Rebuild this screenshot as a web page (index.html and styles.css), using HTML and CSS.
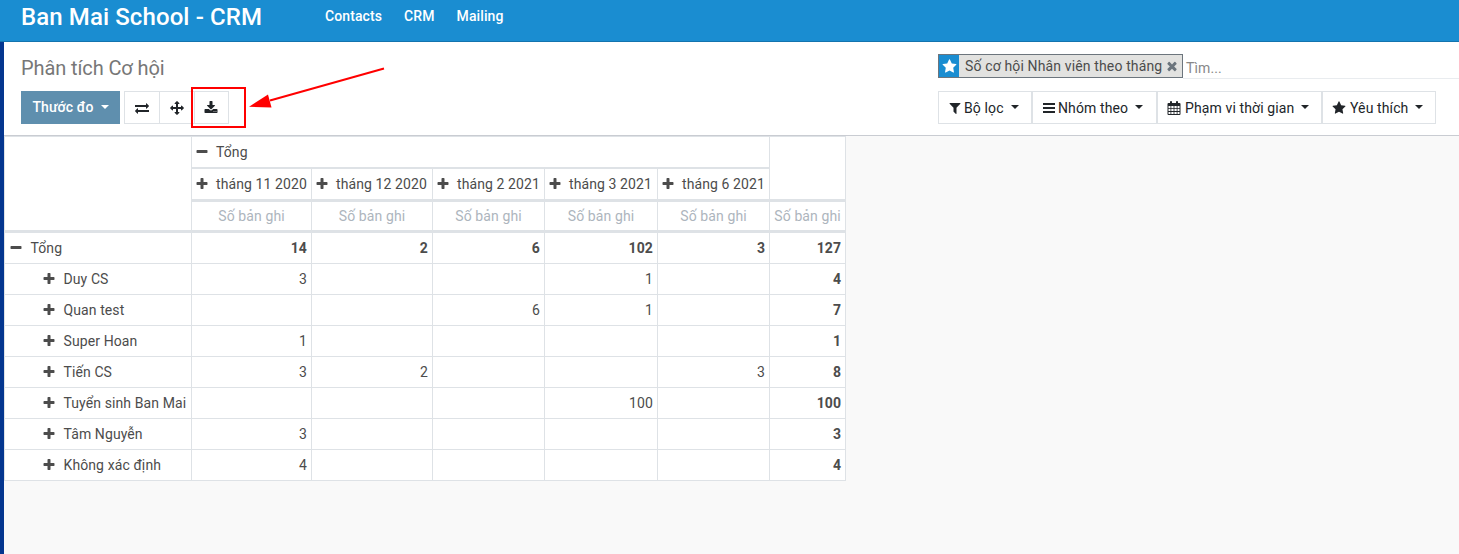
FILE: index.html
```
<!DOCTYPE html>
<html lang="vi">
<head>
<meta charset="utf-8">
<title>Ban Mai School - CRM</title>
<link rel="stylesheet" href="styles.css">
</head>
<body>
<svg class="sprite" width="0" height="0">
  <symbol id="plus" viewBox="0 0 1792 1792"><path d="M1600 736v192q0 40-28 68t-68 28h-416v416q0 40-28 68t-68 28h-192q-40 0-68-28t-28-68v-416h-416q-40 0-68-28t-28-68v-192q0-40 28-68t68-28h416v-416q0-40 28-68t68-28h192q40 0 68 28t28 68v416h416q40 0 68 28t28 68z"/></symbol>
  <symbol id="minus" viewBox="0 0 1792 1792"><path d="M1600 736v192q0 40-28 68t-68 28h-1216q-40 0-68-28t-28-68v-192q0-40 28-68t68-28h1216q40 0 68 28t28 68z"/></symbol>
  <symbol id="star" viewBox="0 0 1792 1792"><path d="M1728 647q0 22-26 48l-363 354 86 500q1 7 1 20 0 21-10.5 35.5t-30.5 14.5q-19 0-40-12l-449-236-449 236q-22 12-40 12-21 0-31.5-14.5t-10.5-35.5q0-6 2-20l86-500-364-354q-25-27-25-48 0-37 56-46l502-73 225-455q19-41 49-41t49 41l225 455 502 73q56 9 56 46z"/></symbol>
  <symbol id="filter" viewBox="0 0 1792 1792"><path d="M1595 295q17 41-14 70l-493 493v742q0 42-39 59-13 5-25 5-27 0-45-19l-256-256q-19-19-19-45v-486l-493-493q-31-29-14-70 17-39 59-39h1280q42 0 59 39z"/></symbol>
  <symbol id="times" viewBox="0 0 1792 1792"><path d="M1490 1322q0 40-28 68l-136 136q-28 28-68 28t-68-28l-294-294-294 294q-28 28-68 28t-68-28l-136-136q-28-28-28-68t28-68l294-294-294-294q-28-28-28-68t28-68l136-136q28-28 68-28t68 28l294 294 294-294q28-28 68-28t68 28l136 136q28 28 28 68t-28 68l-294 294 294 294q28 28 28 68z"/></symbol>
  <symbol id="bars" viewBox="0 0 14 14"><path d="M1 2h12v2H1zM1 6h12v2H1zM1 10h12v2H1z"/></symbol>
  <symbol id="download" viewBox="0 0 1792 1792"><path d="M1344 1344q0-26-19-45t-45-19-45 19-19 45 19 45 45 19 45-19 19-45zm256 0q0-26-19-45t-45-19-45 19-19 45 19 45 45 19 45-19 19-45zm128-224v320q0 40-28 68t-68 28h-1472q-40 0-68-28t-28-68v-320q0-40 28-68t68-28h465l135 136q58 56 136 56t136-56l136-136h464q40 0 68 28t28 68zm-325-569q17 41-14 70l-448 448q-18 19-45 19t-45-19l-448-448q-31-29-14-70 17-39 59-39h256v-448q0-26 19-45t45-19h256q26 0 45 19t19 45v448h256q42 0 59 39z"/></symbol>
  <symbol id="arrows" viewBox="0 0 1792 1792"><path d="M1792 896q0 26-19 45l-256 256q-19 19-45 19t-45-19-19-45v-128h-384v384h128q26 0 45 19t19 45-19 45l-256 256q-19 19-45 19t-45-19l-256-256q-19-19-19-45t19-45 45-19h128v-384h-384v128q0 26-19 45t-45 19-45-19l-256-256q-19-19-19-45t19-45l256-256q19-19 45-19t45 19 19 45v128h384v-384h-128q-26 0-45-19t-19-45 19-45l256-256q19-19 45-19t45 19l256 256q19 19 19 45t-19 45-45 19h-128v384h384v-128q0-26 19-45t45-19 45 19l256 256q19 19 19 45z"/></symbol>
  <symbol id="exchange" viewBox="0 0 1792 1792"><path d="M1792 1184v192q0 13-9.500 22.500t-22.500 9.500h-1376v192q0 13-9.500 22.500t-22.500 9.500q-12 0-24-10l-319-320q-9-9-9-22 0-14 9-23l320-320q9-9 23-9 13 0 22.500 9.500t9.500 22.500v192h1376q13 0 22.500 9.500t9.500 22.500zm0-544q0 14-9 23l-320 320q-9 9-23 9-13 0-22.500-9.500t-9.500-22.500v-192h-1376q-13 0-22.500-9.500t-9.500-22.500v-192q0-13 9.500-22.500t22.500-9.500h1376v-192q0-14 9-23t23-9q12 0 24 10l319 319q9 9 9 23z"/></symbol>
  <symbol id="calendar" viewBox="0 0 14 14"><path fill-rule="evenodd" d="M1.500 2H3V.8Q3 0 4 0t1 .8V2h4V.8Q9 0 10 0t1 .8V2h1.500q1 0 1 1v10q0 1-1 1h-11q-1 0-1-1V3q0-1 1-1zM1.500 5v2h2V5zM4.300 5v2h2.300V5zM7.400 5v2h2.300V5zM10.500 5v2h2V5zM1.500 7.800v2.300h2V7.800zM4.300 7.800v2.300h2.300V7.800zM7.400 7.800v2.300h2.300V7.800zM10.500 7.800v2.300h2V7.800zM1.500 10.900V13h2v-2.100zM4.300 10.900V13h2.300v-2.100zM7.400 10.900V13h2.300v-2.100zM10.500 10.900V13h2v-2.100z"/></symbol>
</svg>

<header class="navbar">
  <div class="brand">Ban Mai School - CRM</div>
  <nav class="menu"><a>Contacts</a><a>CRM</a><a>Mailing</a></nav>
</header>

<div class="app">
  <section class="control-panel">
    <div class="panel-left">
      <h1 class="title">Phân tích Cơ hội</h1>
      <div class="buttons">
        <button class="btn btn-primary">Thước đo<span class="caret"></span></button>
        <div class="icon-group">
          <button class="btn"><svg class="icon"><use href="#exchange"/></svg></button>
          <button class="btn"><svg class="icon"><use href="#arrows"/></svg></button>
          <button class="btn"><svg class="icon"><use href="#download"/></svg></button>
        </div>
      </div>
    </div>
    <div class="panel-right">
      <div class="search">
        <div class="facet">
          <span class="facet-icon"><svg class="icon facet-star"><use href="#star"/></svg></span>
          <span class="facet-text">Số cơ hội Nhân viên theo tháng</span>
          <svg class="icon facet-remove"><use href="#times"/></svg>
        </div>
        <div class="search-input">Tìm...</div>
      </div>
      <div class="filters">
        <button class="btn filter-btn w-filter"><svg class="icon"><use href="#filter"/></svg><span class="label">Bộ lọc</span><span class="caret"></span></button>
        <button class="btn filter-btn w-group"><svg class="icon"><use href="#bars"/></svg><span class="label">Nhóm theo</span><span class="caret"></span></button>
        <button class="btn filter-btn w-time"><svg class="icon"><use href="#calendar"/></svg><span class="label">Phạm vi thời gian</span><span class="caret"></span></button>
        <button class="btn filter-btn w-fav"><svg class="icon"><use href="#star"/></svg><span class="label">Yêu thích</span><span class="caret"></span></button>
      </div>
    </div>
  </section>

  <table class="pivot">
    <colgroup><col class="c0"><col class="c1"><col class="c2"><col class="c3"><col class="c4"><col class="c5"><col class="c6"></colgroup>
    <thead>
      <tr class="r1">
        <th rowspan="3"></th>
        <th colspan="5" class="head"><svg class="icon"><use href="#minus"/></svg>Tổng</th>
        <th rowspan="2"></th>
      </tr>
      <tr class="r2">
        <th class="head"><svg class="icon"><use href="#plus"/></svg>tháng 11 2020</th>
        <th class="head"><svg class="icon"><use href="#plus"/></svg>tháng 12 2020</th>
        <th class="head"><svg class="icon"><use href="#plus"/></svg>tháng 2 2021</th>
        <th class="head"><svg class="icon"><use href="#plus"/></svg>tháng 3 2021</th>
        <th class="head"><svg class="icon"><use href="#plus"/></svg>tháng 6 2021</th>
      </tr>
      <tr class="r3"><th>Số bản ghi</th><th>Số bản ghi</th><th>Số bản ghi</th><th>Số bản ghi</th><th>Số bản ghi</th><th>Số bản ghi</th></tr>
    </thead>
    <tbody>
      <tr class="total"><td><svg class="icon"><use href="#minus"/></svg>Tổng</td><td>14</td><td>2</td><td>6</td><td>102</td><td>3</td><td>127</td></tr>
      <tr><td><svg class="icon"><use href="#plus"/></svg>Duy CS</td><td>3</td><td></td><td></td><td>1</td><td></td><td>4</td></tr>
      <tr><td><svg class="icon"><use href="#plus"/></svg>Quan test</td><td></td><td></td><td>6</td><td>1</td><td></td><td>7</td></tr>
      <tr><td><svg class="icon"><use href="#plus"/></svg>Super Hoan</td><td>1</td><td></td><td></td><td></td><td></td><td>1</td></tr>
      <tr><td><svg class="icon"><use href="#plus"/></svg>Tiến CS</td><td>3</td><td>2</td><td></td><td></td><td>3</td><td>8</td></tr>
      <tr><td><svg class="icon"><use href="#plus"/></svg>Tuyển sinh Ban Mai</td><td></td><td></td><td></td><td>100</td><td></td><td>100</td></tr>
      <tr><td><svg class="icon"><use href="#plus"/></svg>Tâm Nguyễn</td><td>3</td><td></td><td></td><td></td><td></td><td>3</td></tr>
      <tr><td><svg class="icon"><use href="#plus"/></svg>Không xác định</td><td>4</td><td></td><td></td><td></td><td></td><td>4</td></tr>
    </tbody>
  </table>
</div>

<div class="highlight"></div>
<svg class="pointer" viewBox="0 0 140 46"><path d="M138 2.500L24 34.500" fill="none" stroke="#f00" stroke-width="2"/><path d="M3 40.700L22 28.500L25.500 41.600z" fill="#f00"/></svg>
</body>
</html>
```

FILE: styles.css
```
* { box-sizing: border-box; }
body {
  margin: 0;
  height: 554px;
  overflow: hidden;
  display: flex;
  flex-direction: column;
  font: 14px/21px Roboto, "Noto Sans", sans-serif;
  letter-spacing: 0.1px;
  color: #4c4c4c;
  background: #f9f9f9;
}
.sprite { position: absolute; }
.icon { width: 14px; height: 14px; fill: currentColor; flex: none; }

.navbar {
  height: 42px;
  flex: none;
  display: flex;
  background: #1a8dd1;
  border-bottom: 1px solid #1374ae;
  color: #fff;
  padding-left: 21px;
}
.brand { width: 304px; font-size: 24px; font-weight: 500; line-height: 34px; white-space: nowrap; }
.menu { display: flex; gap: 22px; line-height: 33px; font-weight: 500; }

.app { flex: 1; border-left: 4px solid #04368f; }
.control-panel {
  height: 94px;
  display: flex;
  justify-content: space-between;
  background: #fff;
  border-bottom: 1px solid #c9ccd2;
  padding-left: 17px;
}
.panel-left { padding-top: 13px; }
.title { margin: 0 0 9px; font-size: 20px; line-height: 27px; font-weight: 400; letter-spacing: -0.1px; color: #777; }
.buttons, .icon-group, .filters { display: flex; }
.buttons { gap: 4px; }
.btn {
  height: 33px;
  padding: 0;
  display: flex;
  align-items: center;
  justify-content: center;
  font: inherit;
  letter-spacing: inherit;
  color: #212529;
  background: #fff;
  border: 1px solid #dee2e6;
}
.icon-group .btn { width: 36px; margin-right: -1px; padding-right: 1px; }
.icon-group .btn:last-child { width: 35px; }
.btn-primary { width: 99px; background: #5f8fae; border-color: #5f8fae; color: #fff; font-weight: 500; }
.caret {
  margin: -2px 0 0 7px;
  border: 4.500px solid transparent;
  border-top-color: currentColor;
  border-bottom: 0;
}
.panel-right { width: 521px; padding-top: 12px; }
.search { height: 24px; display: flex; margin-bottom: 13px; }
.facet {
  width: 245px;
  display: flex;
  align-items: center;
  background: #e2e2e0;
  border: 1px solid #6c757d;
}
.facet-icon { width: 20px; height: 22px; display: flex; align-items: center; justify-content: center; background: #1a8dd1; color: #fff; }
.facet-star { width: 15px; height: 15px; }
.facet-text { width: 198px; margin: 0 2px 0 6px; white-space: nowrap; letter-spacing: 0.140px; }
.facet-remove { color: #6c757d; }
.search-input { flex: 1; padding: 4px 0 0 3px; color: #888; border-bottom: 1px solid #e9ecef; height: 25px; }
.filter-btn { justify-content: flex-start; padding: 1px 0 0 9px; white-space: nowrap; }
.filter-btn .label { margin-left: 2px; letter-spacing: 0.120px; }
.filter-btn .icon { margin-top: -1px; }
.w-filter { width: 94px; }
.w-group { width: 125px; }
.w-time { width: 165px; }
.w-time .label, .w-fav .label { margin-left: 4px; }
.w-fav { width: 114px; }

.pivot {
  width: 842px;
  table-layout: fixed;
  border-collapse: separate;
  border-spacing: 0;
  border: solid #dee2e6;
  border-width: 1px 0 0 1px;
  background: #fff;
}
.c0 { width: 187px; }
.c1 { width: 120px; }
.c2 { width: 121px; }
.c3 { width: 112px; }
.c4 { width: 113px; }
.c5 { width: 112px; }
.c6 { width: 76px; }
.pivot th, .pivot td {
  padding: 0 4px;
  border: solid #dee2e6;
  border-width: 0 1px 1px 0;
  font-weight: 400;
  text-align: right;
  white-space: nowrap;
}
.pivot tr { height: 31px; }
.pivot .r1 { height: 32px; }
.pivot .r2 { height: 33px; }
.pivot thead th { border-bottom-width: 3px; }
.pivot .r1 .head { border-bottom-width: 2px; }
.pivot th.head, .pivot td:first-child { text-align: left; }
.pivot th.head { padding-left: 2.500px; }
.pivot .icon { vertical-align: -2px; margin-right: 7.500px; }
.pivot .r3 th { text-align: center; color: #adb5bd; padding: 0 3px; }
.pivot td:first-child { padding-left: 37px; }
.pivot .total td:first-child { padding-left: 4px; }
.pivot .total td:not(:first-child), .pivot td:last-child { font-weight: 700; }

.highlight { position: absolute; left: 191px; top: 87px; width: 55px; height: 41px; border: 2px solid #f00; }
.pointer { position: absolute; left: 246px; top: 66px; width: 140px; height: 46px; }
```
